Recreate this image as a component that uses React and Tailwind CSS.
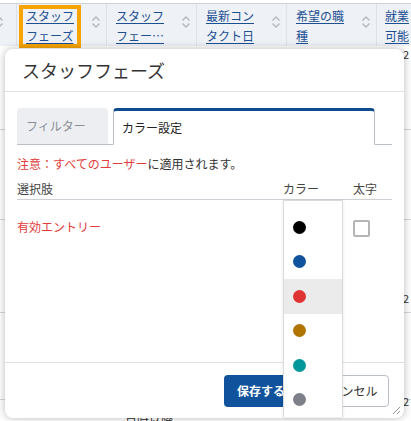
const font = { fontFamily: '"Noto Sans CJK JP", "Noto Sans", sans-serif' };

function SortIcon() {
  return (
    <svg width="10" height="14" viewBox="0 0 10 14" className="shrink-0">
      <path d="M1.5 5.5 L5 2 L8.5 5.5" fill="none" stroke="#b4b9c0" strokeWidth="1.4" />
      <path d="M1.5 8.5 L5 12 L8.5 8.5" fill="none" stroke="#b4b9c0" strokeWidth="1.4" />
    </svg>
  );
}

const headerCols = [
  ['スタッフ', 'フェーズ'],
  ['スタッフ', 'フェー…'],
  ['最新コン', 'タクト日'],
  ['希望の職', '種'],
];

const colors = ['#000000', '#10529b', '#e03434', '#b07400', '#00979a', '#7d8088'];

function BackgroundTable() {
  return (
    <div className="absolute inset-0">
      <div className="mt-[3px] flex h-[43px] border-t border-[#cfd3d8] bg-[#eef1f5] text-[12px] leading-[20px]">
        <div className="flex w-[17px] items-start border-r border-[#dde1e6] pt-[11px]">
          <div className="-ml-[6px]">
            <SortIcon />
          </div>
        </div>
        {headerCols.map((c, i) => (
          <div key={i} className="relative flex w-[90px] shrink-0 items-start border-r border-[#dde1e6] pl-[9px] pt-[2px]">
            {i === 0 && (
              <div className="absolute left-[2px] top-[1px] h-[43px] w-[62px] border-4 border-[#f7a400]" />
            )}
            <div className="w-[56px] text-[#1d4f93] underline underline-offset-2">
              <div>{c[0]}</div>
              <div>{c[1]}</div>
            </div>
            <div className="pl-[9px] pt-[9px]">
              <SortIcon />
            </div>
          </div>
        ))}
        <div className="pl-[8px] pt-[2px] text-[#1d4f93] underline underline-offset-2">
          <div>就業</div>
          <div>可能</div>
        </div>
      </div>
      <div className="text-[11px] text-[#333]">
        <div className="h-[84px] border-b border-[#d5d8dc] pl-[397px]">02</div>
        <div className="h-[90px] border-b border-[#d5d8dc]" />
        <div className="h-[93px] border-b border-[#d5d8dc] pl-[397px] pt-[70px]">02</div>
        <div className="h-[87px] border-b border-[#d5d8dc] pl-[397px] pt-[80px]">02</div>
        <div className="pl-[125px] pt-[10px] text-[12px]">日時以降</div>
      </div>
    </div>
  );
}

export default function App() {
  return (
    <div className="relative h-[421px] w-[411px] overflow-hidden bg-white" style={font}>
      <BackgroundTable />

      <div className="absolute left-[5px] top-[49px] flex h-[369px] w-[399px] flex-col rounded-lg bg-white shadow-[0_0_8px_rgba(0,0,0,0.28)]">
        <div className="flex h-[43px] items-center border-b border-[#dcdfe3] pl-[17px] text-[18px] text-[#333]">
          スタッフフェーズ
        </div>

        <div className="relative flex-1 px-[12px] pt-[16px]">
          <div className="flex items-end gap-[5px] border-b border-[#b9bec5] text-[12px]">
            <div className="flex h-[36px] w-[91px] items-center rounded-t bg-[#eceef1] pl-[9px] text-[#8a8f96]">
              フィルター
            </div>
            <div className="-mb-px flex h-[37px] w-[262px] items-center rounded-t border-x border-t-[3px] border-x-[#b9bec5] border-t-[#0f4c8f] border-b border-b-white bg-white pl-[8px] text-[#222]">
              カラー設定
            </div>
          </div>

          <div className="pt-[10px] text-[12px] leading-[18px]">
            <span className="text-[#e23b3b]">注意：すべてのユーザー</span>
            <span className="text-[#333]">に適用されます。</span>
          </div>

          <div className="mt-[9px] flex h-[18px] border-b border-[#ccd0d5] text-[12px] leading-[14px] text-[#444]">
            <div className="flex-1">選択肢</div>
            <div className="w-[71px] pl-[1px]">カラー</div>
            <div className="w-[39px]">太字</div>
          </div>

          <div className="flex h-[55px] items-center text-[12px]">
            <div className="flex-1 pb-[2px] text-[#e23b3b]">有効エントリー</div>
            <div className="w-[71px]" />
            <div className="w-[39px] pt-[1px]">
              <div className="h-[17px] w-[17px] rounded-[2px] border-2 border-[#b5b5b5] bg-white" />
            </div>
          </div>
        </div>

        <div className="flex h-[56px] items-start justify-end gap-[5px] border-t border-[#dcdfe3] pr-[15px] pt-[12px] text-[12px]">
          <button className="h-[32px] w-[77px] rounded bg-[#10529b] pl-[1px] text-left indent-[12px] font-bold text-white">
            保存する
          </button>
          <button className="h-[32px] w-[83px] rounded border border-[#b9bec5] bg-white text-[#333]">
            キャンセル
          </button>
        </div>

        <svg className="absolute bottom-[3px] right-[3px]" width="10" height="10" viewBox="0 0 10 10">
          <path d="M2 9 L9 2 M6 9 L9 6" stroke="#999" strokeWidth="1" />
        </svg>
      </div>

      <div className="absolute left-[283px] top-[200px] w-[60px] border-x border-t border-[#d8dadd] bg-white pt-[9px] shadow-[0_1px_3px_rgba(0,0,0,0.1)]">
        {colors.map((c, i) => (
          <div key={c} className={`flex h-[34.5px] items-center pl-[9px] ${i === 2 ? 'bg-[#ebebeb]' : ''}`}>
            <div className="h-[13px] w-[13px] rounded-full" style={{ backgroundColor: c }} />
          </div>
        ))}
      </div>
    </div>
  );
}
